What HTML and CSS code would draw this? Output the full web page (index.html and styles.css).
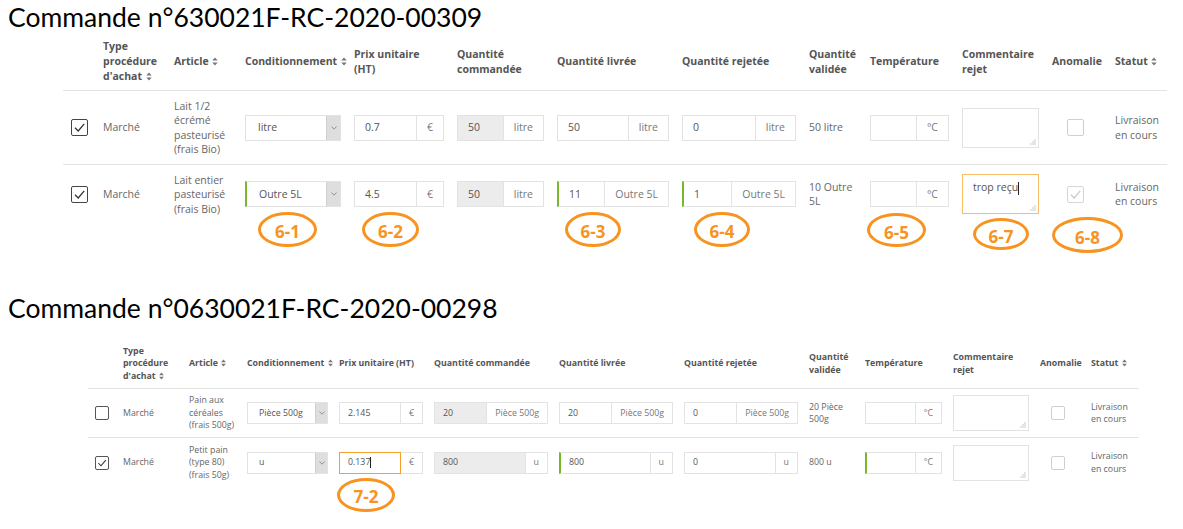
FILE: index.html
```html
<!DOCTYPE html>
<html lang="fr">
<head>
<meta charset="utf-8">
<title>Commandes</title>
<link rel="stylesheet" href="styles.css">
</head>
<body>
<section class="order order-1">
  <h1 class="title">Commande n°630021F-RC-2020-00309</h1>
  <div class="wrap">
    <table class="grid t1">
      <colgroup>
        <col class="c0"><col class="c1"><col class="c2"><col class="c3"><col class="c4"><col class="c5"><col class="c6"><col class="c7"><col class="c8"><col class="c9"><col class="c10"><col class="c11"><col class="c12">
      </colgroup>
      <thead>
        <tr>
          <th></th>
          <th>Type<br>procédure<br>d'achat <svg class="sort" viewBox="0 0 6 10"><path d="M3 0.5L6 4H0z M0 6H6L3 9.5z"/></svg></th>
          <th>Article <svg class="sort" viewBox="0 0 6 10"><path d="M3 0.5L6 4H0z M0 6H6L3 9.5z"/></svg></th>
          <th>Conditionnement <svg class="sort" viewBox="0 0 6 10"><path d="M3 0.5L6 4H0z M0 6H6L3 9.5z"/></svg></th>
          <th>Prix unitaire<br>(HT)</th>
          <th>Quantité<br>commandée</th>
          <th>Quantité livrée</th>
          <th>Quantité rejetée</th>
          <th>Quantité<br>validée</th>
          <th>Température</th>
          <th>Commentaire<br>rejet</th>
          <th>Anomalie</th>
          <th>Statut <svg class="sort" viewBox="0 0 6 10"><path d="M3 0.5L6 4H0z M0 6H6L3 9.5z"/></svg></th>
        </tr>
      </thead>
      <tbody>
        <tr>
          <td><span class="cb"><svg viewBox="0 0 14 14"><path d="M2.8 7.2L5.8 10.2L11.4 3.6"/></svg></span></td>
          <td>Marché</td>
          <td>Lait 1/2 écrémé pasteurisé (frais Bio)</td>
          <td><div class="select"><span class="val">litre</span><span class="arrow"><svg viewBox="0 0 6 4"><path d="M0.5 0.5L3 3.2L5.5 0.5"/></svg></span></div></td>
          <td><div class="field"><span class="val">0.7</span><span class="unit">€</span></div></td>
          <td><div class="field"><span class="val ro">50</span><span class="unit">litre</span></div></td>
          <td><div class="field"><span class="val">50</span><span class="unit">litre</span></div></td>
          <td><div class="field"><span class="val">0</span><span class="unit">litre</span></div></td>
          <td>50 litre</td>
          <td><div class="field"><span class="val"></span><span class="unit">°C</span></div></td>
          <td><div class="area"><svg class="grip" viewBox="0 0 6 6"><rect x="4.5" y="0.5" width="1" height="1"/><rect x="2.5" y="2.5" width="1" height="1"/><rect x="4.5" y="2.5" width="1" height="1"/><rect x="0.5" y="4.5" width="1" height="1"/><rect x="2.5" y="4.5" width="1" height="1"/><rect x="4.5" y="4.5" width="1" height="1"/></svg></div></td>
          <td><span class="cb light anom"></span></td>
          <td>Livraison en cours</td>
        </tr>
        <tr>
          <td><span class="cb"><svg viewBox="0 0 14 14"><path d="M2.8 7.2L5.8 10.2L11.4 3.6"/></svg></span></td>
          <td>Marché</td>
          <td>Lait entier pasteurisé (frais Bio)</td>
          <td><div class="select ok"><span class="val">Outre 5L</span><span class="arrow"><svg viewBox="0 0 6 4"><path d="M0.5 0.5L3 3.2L5.5 0.5"/></svg></span></div></td>
          <td><div class="field"><span class="val">4.5</span><span class="unit">€</span></div></td>
          <td><div class="field"><span class="val ro">50</span><span class="unit">litre</span></div></td>
          <td><div class="field"><span class="val ok">11</span><span class="unit">Outre 5L</span></div></td>
          <td><div class="field"><span class="val ok">1</span><span class="unit">Outre 5L</span></div></td>
          <td>10 Outre 5L</td>
          <td><div class="field"><span class="val"></span><span class="unit">°C</span></div></td>
          <td><div class="area focus"><span class="typed">trop reçu</span><span class="caret"></span><svg class="grip" viewBox="0 0 6 6"><rect x="4.5" y="0.5" width="1" height="1"/><rect x="2.5" y="2.5" width="1" height="1"/><rect x="4.5" y="2.5" width="1" height="1"/><rect x="0.5" y="4.5" width="1" height="1"/><rect x="2.5" y="4.5" width="1" height="1"/><rect x="4.5" y="4.5" width="1" height="1"/></svg></div></td>
          <td><span class="cb light disabled anom"><svg viewBox="0 0 14 14"><path d="M2.8 7.2L5.8 10.2L11.4 3.6"/></svg></span></td>
          <td>Livraison en cours</td>
        </tr>
      </tbody>
    </table>
    <span class="note n61">6-1</span>
    <span class="note n62">6-2</span>
    <span class="note n63">6-3</span>
    <span class="note n64">6-4</span>
    <span class="note n65">6-5</span>
    <span class="note n67">6-7</span>
    <span class="note n68">6-8</span>
  </div>
</section>

<section class="order order-2">
  <h1 class="title">Commande n°0630021F-RC-2020-00298</h1>
  <div class="wrap">
    <table class="grid t2">
      <colgroup>
        <col class="c0"><col class="c1"><col class="c2"><col class="c3"><col class="c4"><col class="c5"><col class="c6"><col class="c7"><col class="c8"><col class="c9"><col class="c10"><col class="c11"><col class="c12">
      </colgroup>
      <thead>
        <tr>
          <th></th>
          <th>Type<br>procédure<br>d'achat <svg class="sort" viewBox="0 0 6 10"><path d="M3 0.5L6 4H0z M0 6H6L3 9.5z"/></svg></th>
          <th>Article <svg class="sort" viewBox="0 0 6 10"><path d="M3 0.5L6 4H0z M0 6H6L3 9.5z"/></svg></th>
          <th>Conditionnement <svg class="sort" viewBox="0 0 6 10"><path d="M3 0.5L6 4H0z M0 6H6L3 9.5z"/></svg></th>
          <th>Prix unitaire (HT)</th>
          <th>Quantité commandée</th>
          <th>Quantité livrée</th>
          <th>Quantité rejetée</th>
          <th>Quantité<br>validée</th>
          <th>Température</th>
          <th>Commentaire<br>rejet</th>
          <th>Anomalie</th>
          <th>Statut <svg class="sort" viewBox="0 0 6 10"><path d="M3 0.5L6 4H0z M0 6H6L3 9.5z"/></svg></th>
        </tr>
      </thead>
      <tbody>
        <tr>
          <td><span class="cb"></span></td>
          <td>Marché</td>
          <td>Pain aux céréales (frais 500g)</td>
          <td><div class="select"><span class="val">Pièce 500g</span><span class="arrow"><svg viewBox="0 0 6 4"><path d="M0.5 0.5L3 3.2L5.5 0.5"/></svg></span></div></td>
          <td><div class="field"><span class="val">2.145</span><span class="unit">€</span></div></td>
          <td><div class="field"><span class="val ro">20</span><span class="unit">Pièce 500g</span></div></td>
          <td><div class="field"><span class="val">20</span><span class="unit">Pièce 500g</span></div></td>
          <td><div class="field"><span class="val">0</span><span class="unit">Pièce 500g</span></div></td>
          <td>20 Pièce 500g</td>
          <td><div class="field"><span class="val"></span><span class="unit">°C</span></div></td>
          <td><div class="area"><svg class="grip" viewBox="0 0 6 6"><rect x="4.5" y="0.5" width="1" height="1"/><rect x="2.5" y="2.5" width="1" height="1"/><rect x="4.5" y="2.5" width="1" height="1"/><rect x="0.5" y="4.5" width="1" height="1"/><rect x="2.5" y="4.5" width="1" height="1"/><rect x="4.5" y="4.5" width="1" height="1"/></svg></div></td>
          <td><span class="cb light anom"></span></td>
          <td>Livraison en cours</td>
        </tr>
        <tr>
          <td><span class="cb"><svg viewBox="0 0 14 14"><path d="M2.8 7.2L5.8 10.2L11.4 3.6"/></svg></span></td>
          <td>Marché</td>
          <td>Petit pain (type 80) (frais 50g)</td>
          <td><div class="select"><span class="val">u</span><span class="arrow"><svg viewBox="0 0 6 4"><path d="M0.5 0.5L3 3.2L5.5 0.5"/></svg></span></div></td>
          <td><div class="field"><span class="val focus">0.137<span class="caret"></span></span><span class="unit">€</span></div></td>
          <td><div class="field"><span class="val ro">800</span><span class="unit">u</span></div></td>
          <td><div class="field"><span class="val ok">800</span><span class="unit">u</span></div></td>
          <td><div class="field"><span class="val">0</span><span class="unit">u</span></div></td>
          <td>800 u</td>
          <td><div class="field"><span class="val ok"></span><span class="unit">°C</span></div></td>
          <td><div class="area"><svg class="grip" viewBox="0 0 6 6"><rect x="4.5" y="0.5" width="1" height="1"/><rect x="2.5" y="2.5" width="1" height="1"/><rect x="4.5" y="2.5" width="1" height="1"/><rect x="0.5" y="4.5" width="1" height="1"/><rect x="2.5" y="4.5" width="1" height="1"/><rect x="4.5" y="4.5" width="1" height="1"/></svg></div></td>
          <td><span class="cb light anom"></span></td>
          <td>Livraison en cours</td>
        </tr>
      </tbody>
    </table>
    <span class="note n72">7-2</span>
  </div>
</section>
</body>
</html>
```

FILE: styles.css
```css
* { box-sizing: border-box; }

html, body {
  margin: 0;
  padding: 0;
  background: #fff;
}

body {
  width: 1183px;
  height: 529px;
  overflow: hidden;
  font-family: "Open Sans", "Noto Sans", sans-serif;
  color: #666;
}

.title {
  margin: 2px 0 0 8px;
  font-family: Lato, "Liberation Sans", sans-serif;
  font-size: 26.5px;
  line-height: 30px;
  font-weight: normal;
  color: #000;
}

.order-2 { margin-top: 69px; }

.wrap { position: relative; }
.order-1 .wrap { margin-left: 63px; width: 1104px; margin-top: 1px; }
.order-2 .wrap { margin-left: 88px; width: 1051px; margin-top: 17px; }

.grid {
  border-collapse: collapse;
  table-layout: fixed;
  width: 100%;
}

.grid th {
  text-align: left;
  font-weight: 700;
  color: #555;
  white-space: nowrap;
  vertical-align: middle;
  border-bottom: 1px solid #e3e3e3;
}

.grid td { vertical-align: middle; }
.grid tbody tr:not(:last-child) td { border-bottom: 1px solid #e3e3e3; }

.sort {
  fill: #777;
  vertical-align: -1px;
  margin-left: 1px;
}

/* ---------- table 1 ---------- */
.t1 { font-size: 10.5px; }
.t1 th { padding: 6px 5px 6px 8px; line-height: 15px; }
.t1 td { padding: 7.5px 5px 7.5px 8px; line-height: 14.5px; }
.t1 .sort { width: 6px; height: 9px; }

.t1 .c0 { width: 32px; }
.t1 .c1 { width: 71px; }
.t1 .c2 { width: 71px; }
.t1 .c3 { width: 109px; }
.t1 .c4 { width: 103px; }
.t1 .c5 { width: 100px; }
.t1 .c6 { width: 125px; }
.t1 .c7 { width: 127px; }
.t1 .c8 { width: 61px; }
.t1 .c9 { width: 92px; }
.t1 .c10 { width: 90px; }
.t1 .c11 { width: 63px; }
.t1 .c12 { width: 60px; }

/* ---------- table 2 ---------- */
.t2 { font-size: 8.8px; }
.t2 th { padding: 5px 4px 5px 7px; line-height: 12.8px; }
.t2 td { padding: 5.5px 4px 5.5px 7px; line-height: 12.5px; }
.t2 .sort { width: 5px; height: 8px; }

.t2 .c0 { width: 28px; }
.t2 .c1 { width: 66px; }
.t2 .c2 { width: 58px; }
.t2 .c3 { width: 92px; }
.t2 .c4 { width: 95px; }
.t2 .c5 { width: 125px; }
.t2 .c6 { width: 125px; }
.t2 .c7 { width: 125px; }
.t2 .c8 { width: 56px; }
.t2 .c9 { width: 88px; }
.t2 .c10 { width: 87px; }
.t2 .c11 { width: 51px; }
.t2 .c12 { width: 55px; }

/* ---------- controls ---------- */
.field, .select {
  display: flex;
  width: 100%;
  height: 26px;
}
.t2 .field, .t2 .select { height: 22px; }

.field .val {
  flex: 1;
  min-width: 0;
  display: flex;
  align-items: center;
  padding-left: 10px;
  border: 1px solid #e3e3e3;
  background: #fff;
  color: #555;
}
.t2 .field .val { padding-left: 8px; }

.field .val.ro { background: #ececec; }
.field .val.ok { border-left: 2px solid #76b82a; }
.field .val.focus { border-color: #f5a02a; }

.field .unit {
  display: flex;
  align-items: center;
  padding: 0 10px;
  border: 1px solid #e3e3e3;
  border-left: 0;
  color: #777;
  white-space: nowrap;
}
.t2 .field .unit { padding: 0 8px; }

.select {
  border: 1px solid #e3e3e3;
  background: #fff;
}
.select.ok { border-left: 2px solid #76b82a; }
.select .val {
  flex: 1;
  display: flex;
  align-items: center;
  padding-left: 12px;
  color: #555;
  white-space: nowrap;
}
.t2 .select .val { padding-left: 11px; }
.select .arrow {
  width: 14px;
  background: #dedede;
  border-left: 1px solid #cfcfcf;
  display: flex;
  align-items: center;
  justify-content: center;
}
.t2 .select .arrow { width: 12px; }
.select .arrow svg {
  width: 6px;
  height: 4px;
  fill: none;
  stroke: #8a8a8a;
  stroke-width: 0.9;
}

.area {
  position: relative;
  width: 100%;
  height: 40px;
  border: 1px solid #e3e3e3;
  background: #fff;
  padding: 5px 10px;
  color: #555;
}
.t2 .area { height: 36px; }
.area.focus { border-color: #f8bb66; }
.grip {
  position: absolute;
  right: 2px;
  bottom: 2px;
  width: 6px;
  height: 6px;
  fill: #999;
}

.caret {
  display: inline-block;
  width: 1px;
  height: 13px;
  background: #222;
  vertical-align: middle;
}
.t2 .caret { height: 11px; }

.cb {
  display: block;
  width: 17px;
  height: 17px;
  border: 1.5px solid #444;
  border-radius: 2px;
  background: #fff;
}
.t2 .cb { width: 14px; height: 14px; border-width: 1.3px; border-color: #555; }
.cb svg {
  display: block;
  width: 100%;
  height: 100%;
  fill: none;
  stroke: #333;
  stroke-width: 1.2;
}
.cb.light { border: 1px solid #cfcfcf; }
.cb.disabled { border-color: #d6d6d6; }
.cb.disabled svg { stroke: #c9c9c9; }
.t1 .anom { margin-left: 15px; }
.t2 .anom { margin-left: 11px; }

/* ---------- annotations ---------- */
.note {
  position: absolute;
  display: flex;
  align-items: center;
  justify-content: center;
  padding-top: 4px;
  border: 3px solid #f7931e;
  border-radius: 50%;
  color: #f7931e;
  font-family: "Open Sans", sans-serif;
  font-weight: 700;
  font-size: 17px;
  line-height: 1;
}
.n61 { left: 195px; top: 179px; width: 59px; height: 35px; }
.n62 { left: 299px; top: 179px; width: 57px; height: 35px; }
.n63 { left: 502px; top: 179px; width: 56px; height: 35px; }
.n64 { left: 631px; top: 179px; width: 56px; height: 35px; }
.n65 { left: 804px; top: 180px; width: 59px; height: 34px; }
.n67 { left: 910px; top: 185px; width: 56px; height: 32px; }
.n68 { left: 989px; top: 184px; width: 71px; height: 36px; }
.n72 { left: 249px; top: 138px; width: 58px; height: 34px; }
```
